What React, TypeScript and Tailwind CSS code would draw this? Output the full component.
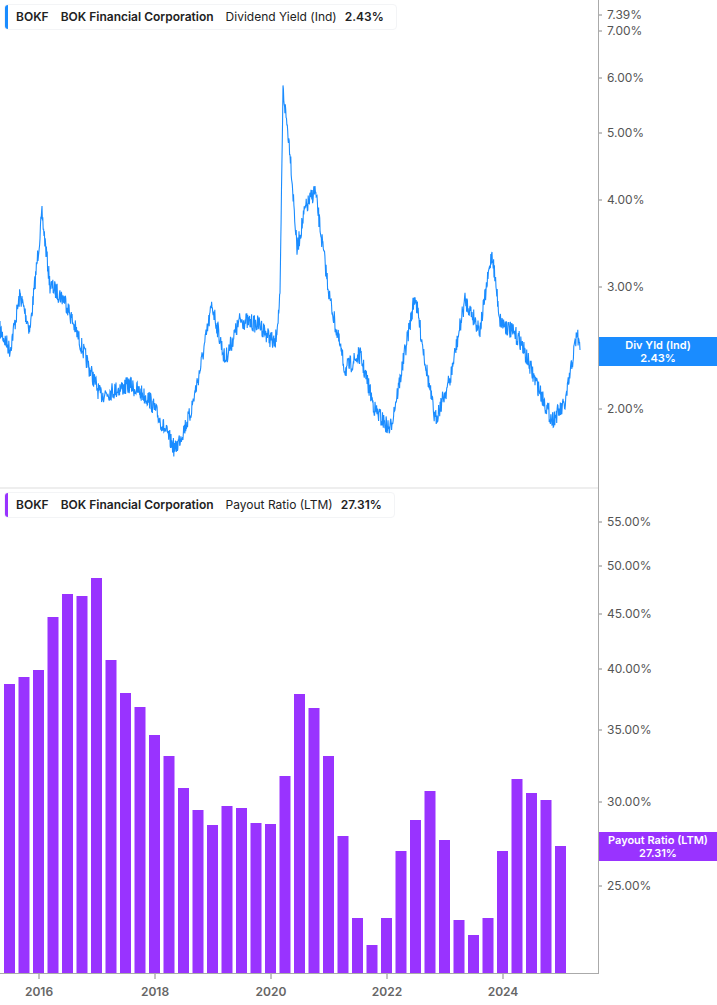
import React from 'react';

const font = { fontFamily: 'Inter, "Liberation Sans", sans-serif' };

const keys: [number, number][] = [
  [0, 330], [10, 350], [20, 295], [30, 330], [42, 215], [50, 285], [65, 300], [90, 370], [100, 395],
  [130, 385], [150, 400], [175, 450], [190, 415], [200, 370], [212, 305], [225, 360], [240, 320],
  [260, 325], [275, 345], [280, 300], [283, 90], [290, 150], [297, 250], [305, 210], [315, 190],
  [330, 300], [345, 370], [360, 355], [375, 410], [390, 430], [400, 380], [415, 295], [425, 360],
  [435, 420], [450, 380], [465, 300], [480, 330], [492, 252], [500, 320], [520, 340], [535, 380],
  [552, 420], [565, 405], [577, 333], [580, 350],
];

function linePath() {
  let seed = 7;
  const rnd = () => {
    seed = (seed * 16807) % 2147483647;
    return seed / 2147483647 - 0.5;
  };
  const pts: string[] = [];
  for (let i = 0; i < keys.length - 1; i++) {
    const [x0, y0] = keys[i];
    const [x1, y1] = keys[i + 1];
    const n = Math.max(1, Math.round((x1 - x0) * 2.5));
    for (let j = 0; j < n; j++) {
      const t = j / n;
      const x = x0 + (x1 - x0) * t;
      const y = y0 + (y1 - y0) * t + rnd() * 18;
      pts.push(`${x.toFixed(1)},${y.toFixed(1)}`);
    }
  }
  pts.push('580,350');
  return 'M' + pts.join(' L');
}

const bars = [684, 677, 670, 617, 594, 596, 578, 660, 693, 707, 735, 756, 788, 810, 825, 806, 808, 823, 824, 776,
  694, 708, 756, 836, 918, 945, 918, 851, 820, 791, 840, 920, 935, 918, 851, 779, 793, 800, 846];

const topTicks: [string, number][] = [['7.39%', 15], ['7.00%', 31], ['6.00%', 78], ['5.00%', 133], ['4.00%', 200], ['3.00%', 287], ['2.00%', 409]];
const botTicks: [string, number][] = [['55.00%', 522], ['50.00%', 566], ['45.00%', 614], ['40.00%', 669], ['35.00%', 730], ['30.00%', 802], ['25.00%', 886]];
const years: [string, number][] = [['2016', 39], ['2018', 155], ['2020', 271], ['2022', 387], ['2024', 503]];

function Legend({ color, label, value }: { color: string; label: string; value: string }) {
  return (
    <div className="absolute left-[4px] flex h-[26px] items-center rounded border border-gray-100 bg-white pr-3 text-[12px] font-semibold text-[#222]">
      <div className="mr-2 h-full w-[3px] rounded-l" style={{ background: color }} />
      <span className="mr-3">BOKF</span>
      <span className="mr-3">BOK Financial Corporation</span>
      <span className="mr-2 font-normal">{label}</span>
      <span>{value}</span>
    </div>
  );
}

export default function App() {
  const d = React.useMemo(linePath, []);
  return (
    <div className="relative h-[1005px] w-[717px] overflow-hidden bg-white" style={font}>
      <svg className="absolute left-0 top-0" width="717" height="1005">
        <path d={d} fill="none" stroke="#1a8cff" strokeWidth="1.1" />
        <line x1="0" y1="488" x2="598" y2="488" stroke="#ddd" />
        {bars.map((y, i) => (
          <rect key={i} x={4 + i * 14.5} y={y} width="11" height={973 - y} fill="#9933ff" />
        ))}
        <line x1="598.5" y1="0" x2="598.5" y2="974" stroke="#aaa" />
        <line x1="0" y1="973.5" x2="599" y2="973.5" stroke="#aaa" />
        {[...topTicks, ...botTicks].map(([, y]) => (
          <line key={y} x1="599" y1={y} x2="602" y2={y} stroke="#888" />
        ))}
        {years.map(([, x]) => (
          <line key={x} x1={x} y1="974" x2={x} y2="979" stroke="#888" />
        ))}
      </svg>
      {[...topTicks, ...botTicks].map(([t, y]) => (
        <div key={t} className="absolute left-[607px] text-[12px] leading-none text-[#555]" style={{ top: y - 6 }}>
          {t}
        </div>
      ))}
      {years.map(([t, x]) => (
        <div key={t} className="absolute top-[986px] w-[40px] text-center text-[12px] font-semibold leading-none text-[#666]" style={{ left: x - 20 }}>
          {t}
        </div>
      ))}
      <div className="absolute left-[599px] top-[337px] flex h-[29px] w-[118px] flex-col items-center justify-center bg-[#1a8cff] text-[11px] font-semibold leading-[13px] text-white">
        <span>Div Yld (Ind)</span>
        <span>2.43%</span>
      </div>
      <div className="absolute left-[599px] top-[832px] flex h-[29px] w-[118px] flex-col items-center justify-center bg-[#9933ff] text-[11px] font-semibold leading-[13px] text-white">
        <span>Payout Ratio (LTM)</span>
        <span>27.31%</span>
      </div>
      <div className="absolute top-[4px] w-full"><Legend color="#1a8cff" label="Dividend Yield (Ind)" value="2.43%" /></div>
      <div className="absolute top-[492px] w-full"><Legend color="#9933ff" label="Payout Ratio (LTM)" value="27.31%" /></div>
    </div>
  );
}
